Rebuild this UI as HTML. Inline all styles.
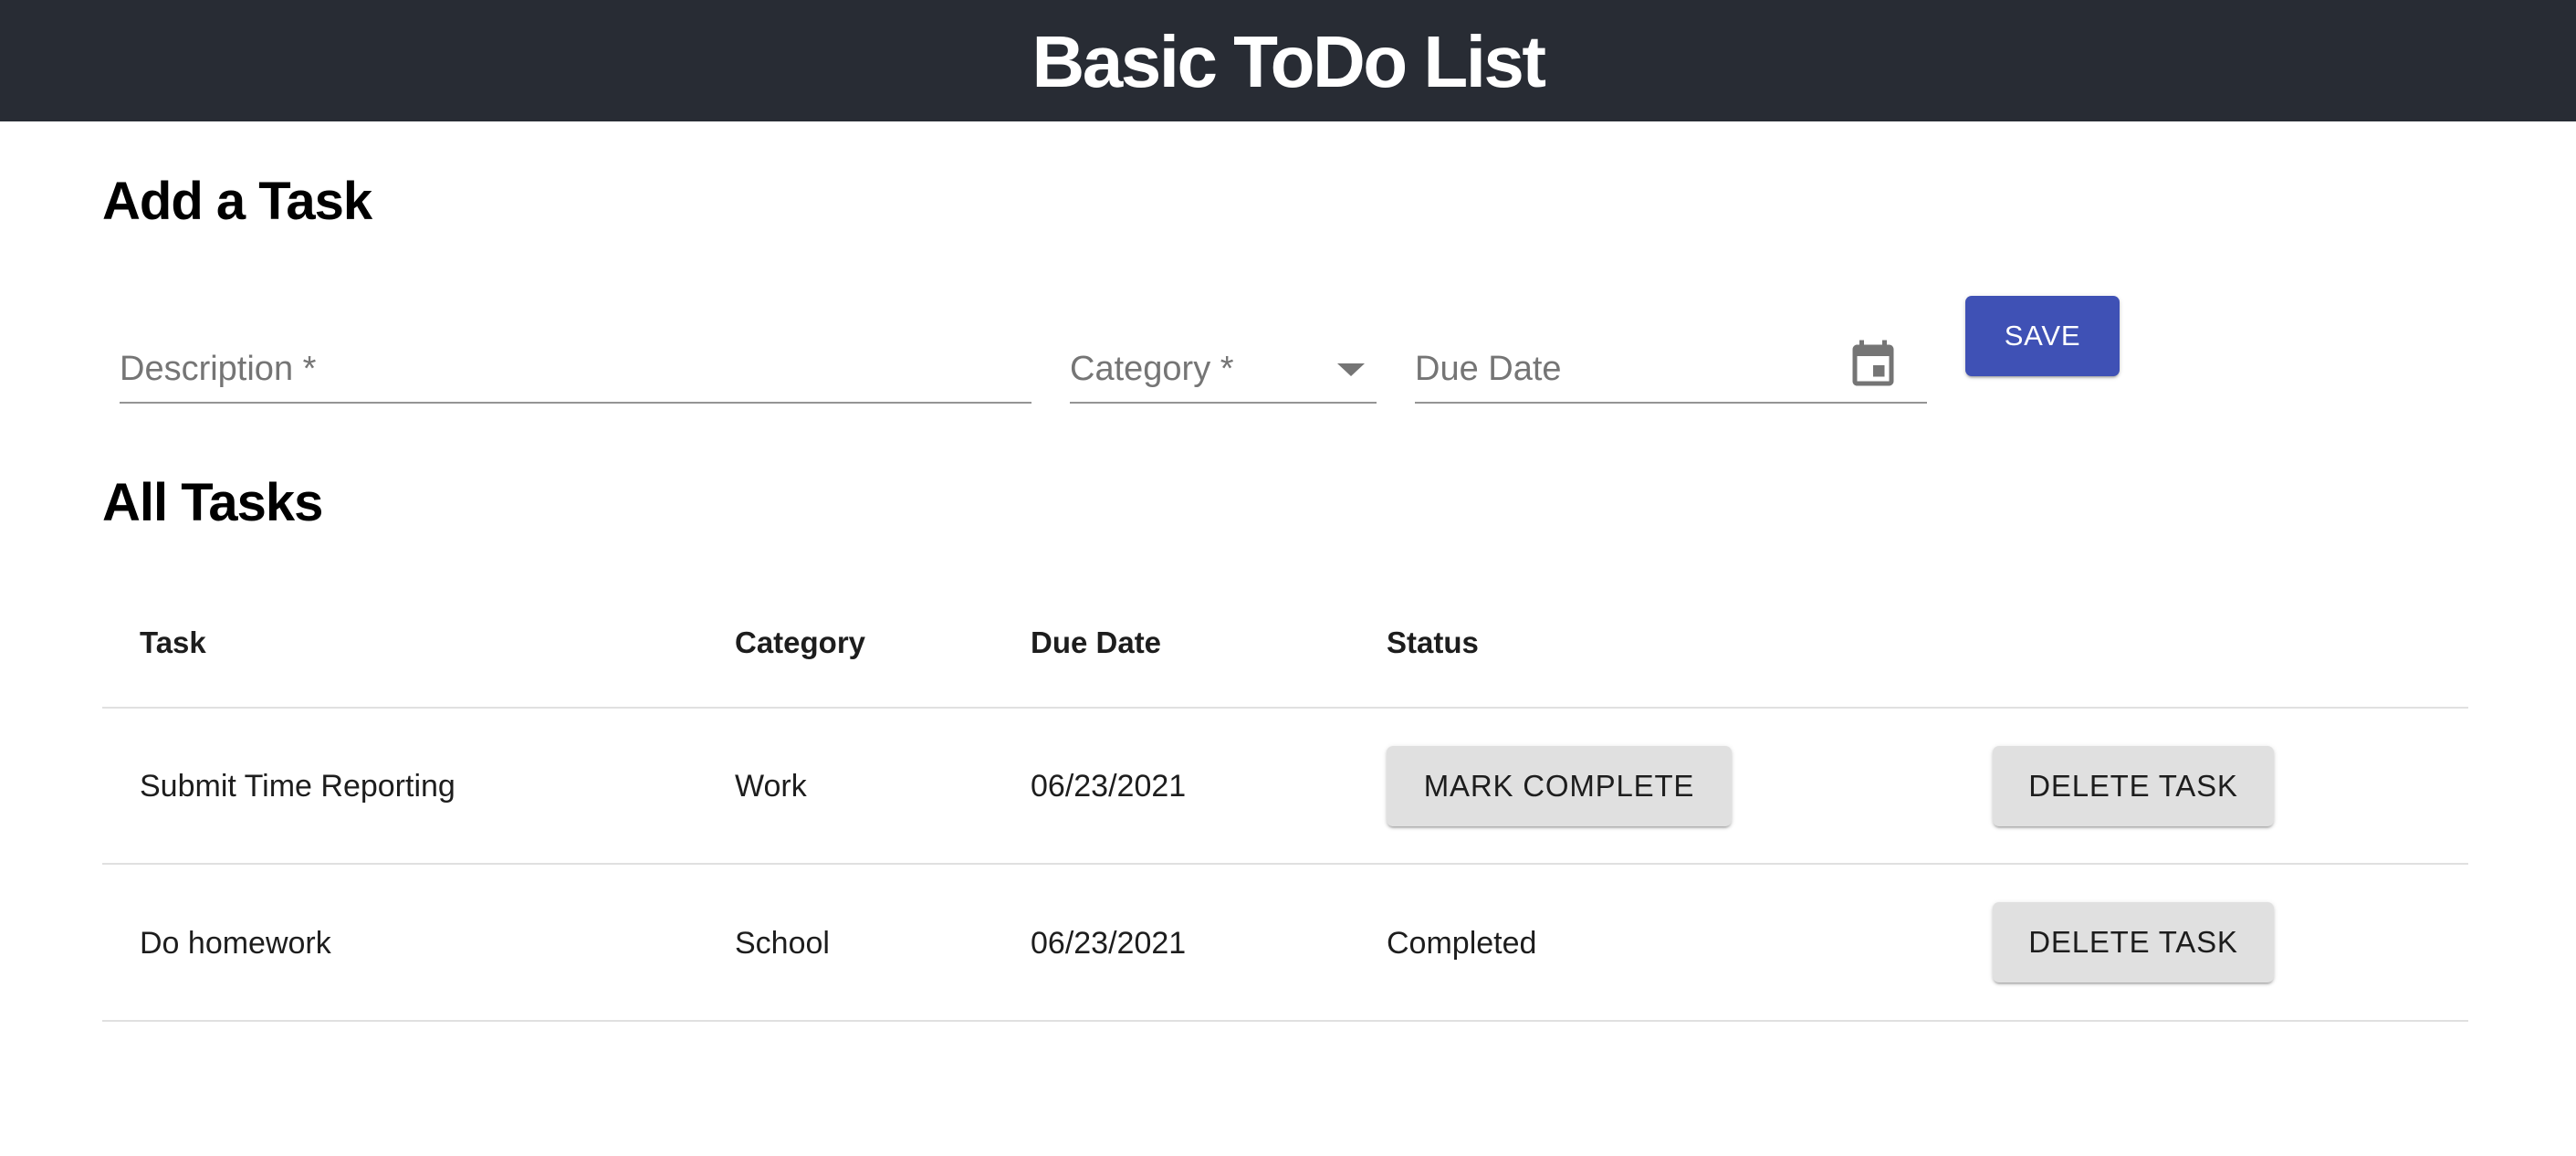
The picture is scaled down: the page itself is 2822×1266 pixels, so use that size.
<!DOCTYPE html>
<html><head><meta charset="utf-8"><style>
*{margin:0;padding:0;box-sizing:border-box}
body{width:2822px;height:1266px;background:#fff;font-family:"Liberation Sans",sans-serif;position:relative;overflow:hidden;color:#000}
.a{position:absolute;white-space:nowrap}
.hdr{left:0;top:0;width:2822px;height:133px;background:#282c34}
.title{left:0;width:2822px;text-align:center;top:18px;font-size:80px;font-weight:bold;color:#fff;letter-spacing:-2.5px;line-height:100px}
h2{position:absolute;font-size:58px;font-weight:bold;letter-spacing:-1px;line-height:70px}
.lbl{font-size:38px;color:#757575;line-height:44px;top:382px}
.ul{height:2px;background:#949494;top:440px}
.btn{position:absolute;border-radius:7px;display:flex;align-items:center;justify-content:center;font-size:33px;letter-spacing:0.8px;box-shadow:0 3px 2px -2px rgba(0,0,0,.25),0 2px 3px rgba(0,0,0,.14),0 1px 6px rgba(0,0,0,.1)}
.g{background:#e0e0e0;color:#1d1d1d}
.th{font-size:33px;font-weight:bold;color:#1d1d1d;line-height:40px}
.td{font-size:34px;color:#1d1d1d;line-height:40px}
.line{left:112px;width:2592px;height:2px;background:#e0e0e0}
</style></head><body>
<div class="a hdr"></div>
<div class="a title">Basic ToDo List</div>
<h2 style="left:112px;top:186px">Add a Task</h2>
<div class="a lbl" style="left:131px">Description *</div>
<div class="a ul" style="left:131px;width:999px"></div>
<div class="a lbl" style="left:1172px">Category *</div>
<svg class="a" style="left:1465px;top:398px" width="30" height="14"><polygon points="0,0 30,0 15,14" fill="#757575"/></svg>
<div class="a ul" style="left:1172px;width:336px"></div>
<div class="a lbl" style="left:1550px">Due Date</div>
<svg class="a" style="left:2022px;top:370px" width="60" height="60" viewBox="0 0 24 24"><path fill="#757575" d="M17 12h-5v5h5v-5zM16 1v2H8V1H6v2H5c-1.11 0-1.990.9-1.99 2L3 19c0 1.1.89 2 2 2h14c1.1 0 2-.9 2-2V5c0-1.1-.9-2-2-2h-1V1h-2zm3 18H5V8h14v11z"/></svg>
<div class="a ul" style="left:1550px;width:561px"></div>
<div class="btn" style="left:2153px;top:324px;width:169px;height:88px;background:#3f51b5;color:#fff;font-size:31px">SAVE</div>
<h2 style="left:112px;top:516px">All Tasks</h2>
<div class="a th" style="left:153px;top:684px">Task</div>
<div class="a th" style="left:805px;top:684px">Category</div>
<div class="a th" style="left:1129px;top:684px">Due Date</div>
<div class="a th" style="left:1519px;top:684px">Status</div>
<div class="a line" style="top:774px"></div>
<div class="a td" style="left:153px;top:841px">Submit Time Reporting</div>
<div class="a td" style="left:805px;top:841px">Work</div>
<div class="a td" style="left:1129px;top:841px">06/23/2021</div>
<div class="btn g" style="left:1519px;top:817px;width:378px;height:88px">MARK COMPLETE</div>
<div class="btn g" style="left:2183px;top:817px;width:308px;height:88px">DELETE TASK</div>
<div class="a line" style="top:945px"></div>
<div class="a td" style="left:153px;top:1013px">Do homework</div>
<div class="a td" style="left:805px;top:1013px">School</div>
<div class="a td" style="left:1129px;top:1013px">06/23/2021</div>
<div class="a td" style="left:1519px;top:1013px">Completed</div>
<div class="btn g" style="left:2183px;top:988px;width:308px;height:88px">DELETE TASK</div>
<div class="a line" style="top:1117px"></div>
</body></html>
